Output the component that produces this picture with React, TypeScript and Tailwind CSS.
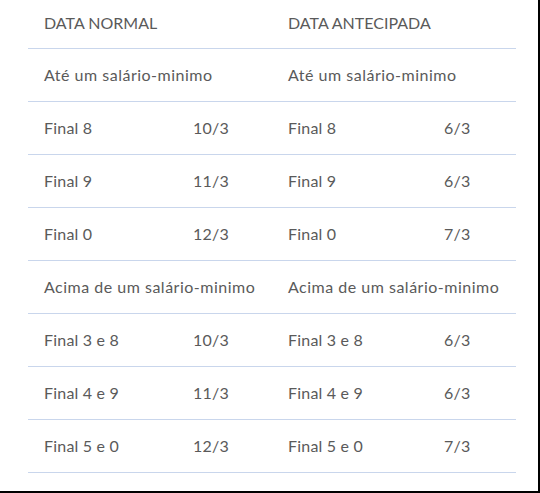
import React from 'react';

const rows1 = [
  ['Final 8', '10/3', 'Final 8', '6/3'],
  ['Final 9', '11/3', 'Final 9', '6/3'],
  ['Final 0', '12/3', 'Final 0', '7/3'],
];

const rows2 = [
  ['Final 3 e 8', '10/3', 'Final 3 e 8', '6/3'],
  ['Final 4 e 9', '11/3', 'Final 4 e 9', '6/3'],
  ['Final 5 e 0', '12/3', 'Final 5 e 0', '7/3'],
];

function Row({ cells }: { cells: string[] }) {
  return (
    <div className="grid grid-cols-[149px_95px_156px_88px] h-[53px] items-center border-b border-[#c9d6ec] tracking-[0.2px]">
      {cells.map((c, i) => (
        <div key={i} className="pl-4 whitespace-nowrap">{c}</div>
      ))}
    </div>
  );
}

function GroupRow({ left, right }: { left: string; right: string }) {
  return (
    <div className="grid grid-cols-[244px_244px] h-[53px] items-center border-b border-[#c9d6ec] tracking-[0.5px]">
      <div className="pl-4 whitespace-nowrap">{left}</div>
      <div className="pl-4 whitespace-nowrap">{right}</div>
    </div>
  );
}

export default function App() {
  return (
    <div className="w-[540px] h-[493px] bg-white border-r-2 border-b-2 border-black text-[16px] text-[#5a5a5a] font-['Lato','Liberation_Sans',sans-serif]">
      <div className="ml-[28px] w-[488px]">
        <div className="grid grid-cols-[244px_244px] h-[49px] items-center border-b border-[#c9d6ec] pb-[2px]">
          <div className="pl-4">DATA NORMAL</div>
          <div className="pl-4">DATA ANTECIPADA</div>
        </div>
        <GroupRow left="Até um salário-minimo" right="Até um salário-minimo" />
        {rows1.map((r, i) => <Row key={i} cells={r} />)}
        <GroupRow left="Acima de um salário-minimo" right="Acima de um salário-minimo" />
        {rows2.map((r, i) => <Row key={i} cells={r} />)}
      </div>
    </div>
  );
}
